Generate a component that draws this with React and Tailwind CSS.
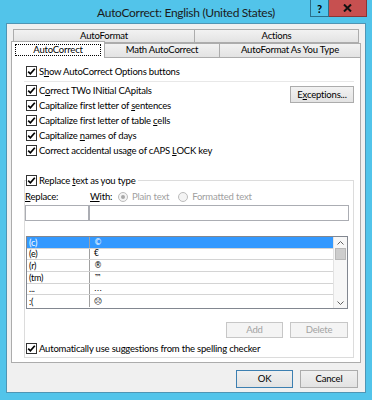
import React from 'react';

function Check() {
  return (
    <span className="w-[11px] h-[11px] shrink-0 border border-[#333333] bg-white flex items-center justify-center">
      <svg width="9" height="9" viewBox="0 0 9 9">
        <path d="M1.2 4.6 L3.4 6.8 L7.8 1.8" fill="none" stroke="#000" strokeWidth="1.7" />
      </svg>
    </span>
  );
}

function CheckRow({ children, className = '' }) {
  return (
    <div className={`flex items-center gap-[2px] h-[15px] ${className}`}>
      <Check />
      <span className="leading-[13px] whitespace-nowrap">{children}</span>
    </div>
  );
}

function Key({ children }) {
  return <span className="underline underline-offset-[1px]">{children}</span>;
}

function Radio({ checked, children }) {
  return (
    <div className="flex items-center gap-[4px] text-[#a0a0a0]">
      <span className="w-[10px] h-[10px] rounded-full border border-[#bcbcbc] bg-[#f4f4f4] flex items-center justify-center">
        {checked && <span className="w-[4px] h-[4px] rounded-full bg-[#a8a8a8]" />}
      </span>
      <span>{children}</span>
    </div>
  );
}

const rows = [
  ['(c)', '©'],
  ['(e)', '€'],
  ['(r)', '®'],
  ['(tm)', '™'],
  ['...', '…'],
  [':(', '☹'],
];

function Chevron({ up }) {
  return (
    <svg width="7" height="4" viewBox="0 0 7 4">
      <path d={up ? 'M0.5 3.5 L3.5 0.5 L6.5 3.5' : 'M0.5 0.5 L3.5 3.5 L6.5 0.5'} fill="none" stroke="#606060" strokeWidth="1" />
    </svg>
  );
}

export default function App() {
  return (
    <div className="w-[372px] h-[400px] bg-[#52c4ea] flex flex-col overflow-hidden font-['Lato',sans-serif] text-[9.5px] tracking-[-0.2px] text-black">
      {/* title bar */}
      <div className="h-[23px] shrink-0 relative flex justify-center">
        <span className="pt-[3px] text-[12px] leading-[19px] tracking-[-0.3px] text-[#1b1b1b]">AutoCorrect: English (United States)</span>
        <div className="absolute right-[5px] top-0 flex">
          <div className="w-[19px] h-[17px] border-x border-b border-[#2b6f8a] flex items-center justify-center font-bold text-[11px] leading-none">?</div>
          <div className="w-[38px] h-[17px] bg-[#c75050] border-r border-b border-[#8b3434] flex items-center justify-center">
            <svg width="9" height="8" viewBox="0 0 9 8">
              <path d="M1 0.5 L8 7.5 M8 0.5 L1 7.5" stroke="#111" strokeWidth="2" />
            </svg>
          </div>
        </div>
      </div>

      {/* client area */}
      <div className="mx-[6px] h-[370px] shrink-0 bg-[#f0f0f0] border border-[#4f95b4] flex flex-col pt-[5px] px-[4px]">
        {/* tabs */}
        <div className="flex ml-[2px] h-[14px]">
          <div className="w-[182px] border border-[#acacac] bg-linear-to-b from-[#f2f2f2] to-[#e3e3e3] text-center leading-[12px]">AutoFormat</div>
          <div className="w-[164px] border-y border-r border-[#acacac] bg-linear-to-b from-[#f2f2f2] to-[#e3e3e3] text-center leading-[12px]">Actions</div>
        </div>
        <div className="flex h-[14px] items-end">
          <div className="relative z-10 w-[94px] h-[17px] -mb-px bg-white border-x border-t border-[#acacac] px-[3px] pt-[2px]">
            <div className="h-[12px] border border-dotted border-black text-center leading-[10px]">AutoCorrect</div>
          </div>
          <div className="w-[115px] h-[14px] border-t border-r border-[#acacac] bg-linear-to-b from-[#f2f2f2] to-[#e3e3e3] text-center leading-[12px]">Math AutoCorrect</div>
          <div className="w-[141px] h-[14px] border-t border-r border-[#acacac] bg-linear-to-b from-[#f2f2f2] to-[#e3e3e3] text-center leading-[12px]">AutoFormat As You Type</div>
        </div>

        {/* panel */}
        <div className="h-[306px] shrink-0 border border-[#acacac] bg-white pl-[12px] pr-[6px] flex flex-col">
          <CheckRow className="mt-[6px] ml-[2px]">S<Key>h</Key>ow AutoCorrect Options buttons</CheckRow>
          <div className="mt-[2px] h-px bg-[#e8e8e8]" />
          <div className="flex mt-[1px]">
            <div className="flex flex-col ml-[2px]">
              <CheckRow>C<Key>o</Key>rrect TWo INitial CApitals</CheckRow>
              <CheckRow>Capitalize first letter of <Key>s</Key>entences</CheckRow>
              <CheckRow>Capitalize first letter of table <Key>c</Key>ells</CheckRow>
              <CheckRow>Capitalize <Key>n</Key>ames of days</CheckRow>
              <CheckRow>Correct accidental usage of cAPS <Key>L</Key>OCK key</CheckRow>
            </div>
            <button className="ml-auto mt-[3px] w-[64px] h-[17px] border border-[#acacac] bg-linear-to-b from-[#f2f2f2] to-[#e3e3e3] leading-[13px]">
              E<Key>x</Key>ceptions...
            </button>
          </div>

          <fieldset className="mt-[15px] border border-[#dcdcdc] pr-[4px] pb-[1px] flex flex-col">
            <legend className="ml-[1px] pr-[2px]">
              <CheckRow className="h-[13px]">Replace <Key>t</Key>ext as you type</CheckRow>
            </legend>
            <div className="flex items-center h-[14px] mt-[2px] whitespace-nowrap">
              <span className="w-[65px]"><Key>R</Key>eplace:</span>
              <span className="w-[28px]"><Key>W</Key>ith:</span>
              <Radio checked>Plain text</Radio>
              <div className="ml-[9px]">
                <Radio>Formatted text</Radio>
              </div>
            </div>
            <div className="flex mt-[1px] h-[16px]">
              <div className="w-[64px] border border-[#abadb3] bg-white" />
              <div className="flex-1 border border-[#abadb3] bg-white" />
            </div>

            {/* list */}
            <div className="mt-[15px] ml-[1px] w-[322px] h-[73px] border border-[#828790] bg-white flex">
              <div className="flex-1 flex flex-col">
                {rows.map(([a, b], i) => (
                  <div
                    key={i}
                    className={`h-[11.67px] flex items-center leading-[9px] text-[9px] border-b border-[#d4d4d4] ${i === 0 ? 'bg-[#3399ff] text-white' : ''} ${i === rows.length - 1 ? 'border-b-0' : ''}`}
                  >
                    <span className="w-[63px] h-full pl-[2px] border-r border-[#a0a0a0] flex items-center">{a}</span>
                    <span className="pl-[4px] font-['DejaVu_Sans',sans-serif] text-[8px]">{b}</span>
                  </div>
                ))}
              </div>
              <div className="w-[14px] border-l border-[#e3e3e3] bg-[#f7f7f7] flex flex-col">
                <div className="h-[11px] flex items-center justify-center"><Chevron up /></div>
                <div className="h-[12px] mx-[1px] bg-[#cdcdcd] border border-[#b8b8b8]" />
                <div className="flex-1" />
                <div className="h-[11px] flex items-center justify-center"><Chevron /></div>
              </div>
            </div>

            <div className="flex justify-end gap-[7px] mt-[13px] mr-[1px]">
              <button className="w-[57px] h-[16px] border border-[#c7c7c7] bg-[#f4f4f4] text-[#a3a3a3] leading-[12px]">Add</button>
              <button className="w-[58px] h-[16px] border border-[#c7c7c7] bg-[#f4f4f4] text-[#a3a3a3] leading-[12px]">Delete</button>
            </div>
            <CheckRow className="mt-[3px] ml-[1px] h-[13px]">Automatically use suggestions from the spelling checker</CheckRow>
          </fieldset>
        </div>

        {/* dialog buttons */}
        <div className="flex justify-end gap-[7px] mt-[7px] pr-[3px]">
          <button className="w-[57px] h-[18px] border border-[#3c7fb1] bg-linear-to-b from-[#f0f0f0] to-[#e3e3e3] leading-[14px]">OK</button>
          <button className="w-[58px] h-[18px] border border-[#acacac] bg-linear-to-b from-[#f0f0f0] to-[#e3e3e3] leading-[14px]">Cancel</button>
        </div>
      </div>
    </div>
  );
}
